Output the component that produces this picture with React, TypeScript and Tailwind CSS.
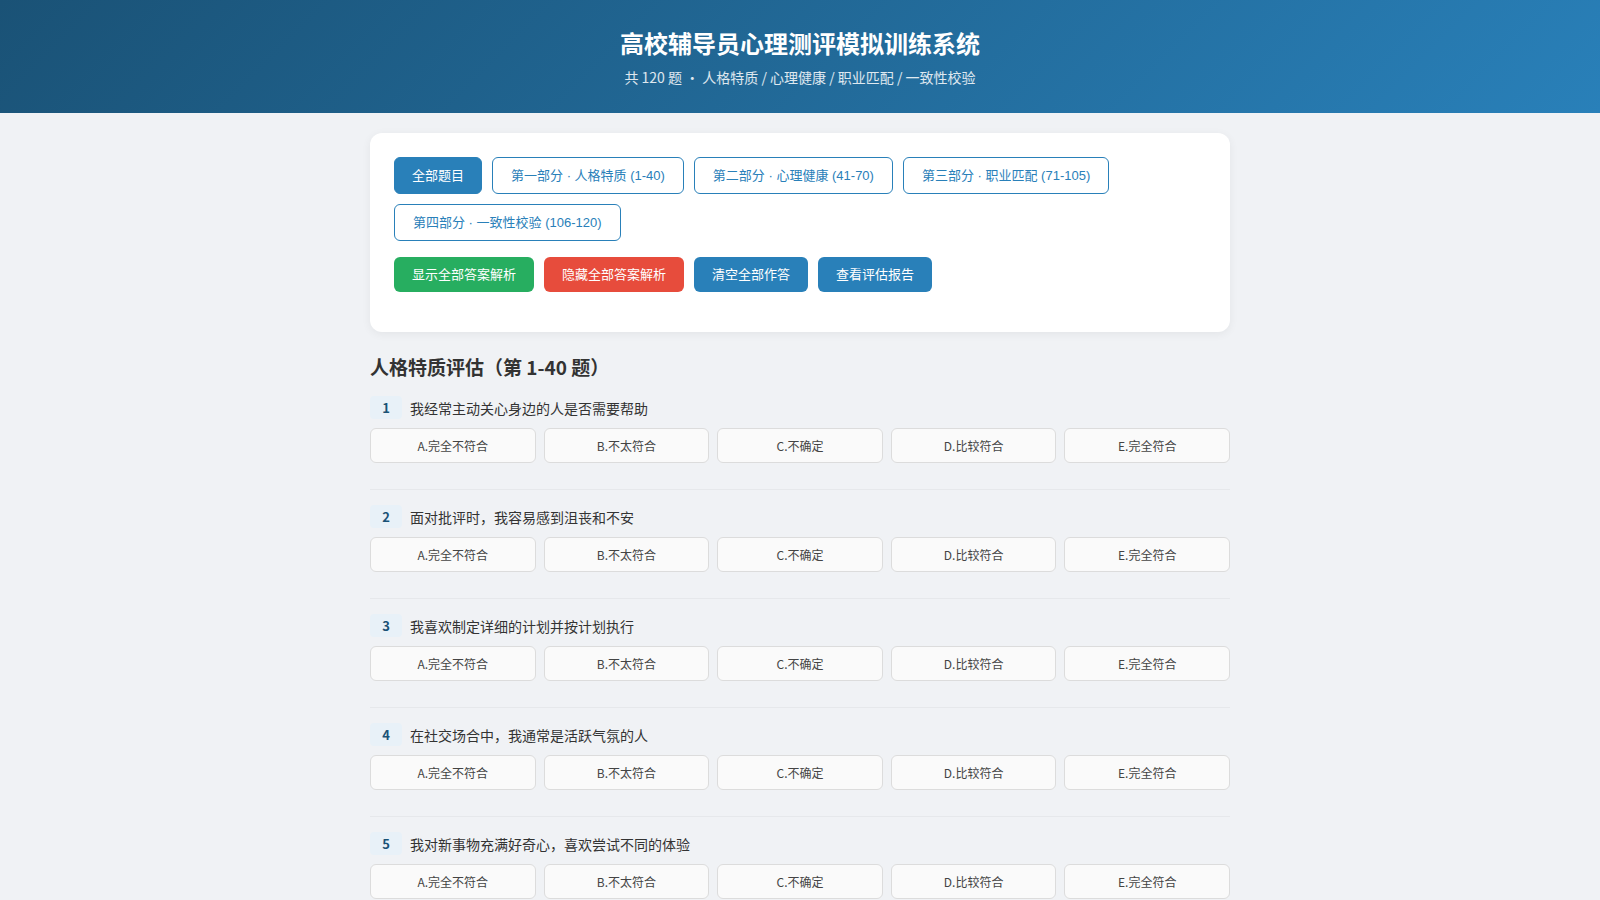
import React from "react";

const filters = [
  "全部题目",
  "第一部分 · 人格特质 (1-40)",
  "第二部分 · 心理健康 (41-70)",
  "第三部分 · 职业匹配 (71-105)",
  "第四部分 · 一致性校验 (106-120)",
];

const questions = [
  "我经常主动关心身边的人是否需要帮助",
  "面对批评时，我容易感到沮丧和不安",
  "我喜欢制定详细的计划并按计划执行",
  "在社交场合中，我通常是活跃气氛的人",
  "我对新事物充满好奇心，喜欢尝试不同的体验",
  "我能够在压力下保持冷静",
];

const options = ["A.完全不符合", "B.不太符合", "C.不确定", "D.比较符合", "E.完全符合"];

const btnFont = { fontFamily: '"Liberation Sans", "Noto Sans CJK SC", sans-serif' };

export default function App() {
  return (
    <div
      className="min-h-screen bg-[#f0f2f5] text-[#333]"
      style={{ fontFamily: '"Noto Sans CJK SC", "Noto Sans", sans-serif' }}
    >
      <header className="bg-[linear-gradient(135deg,#1a5276,#2980b9)] pt-[27px] pb-[25px] text-center text-white">
        <h1 className="text-[24px] font-bold leading-[32px]">高校辅导员心理测评模拟训练系统</h1>
        <p className="mt-[8px] text-[14px] leading-[21px] text-white/85">
          共 120 题 · 人格特质 / 心理健康 / 职业匹配 / 一致性校验
        </p>
      </header>

      <main className="mx-auto w-[860px] pt-[20px]">
        <section className="rounded-[12px] bg-white px-[24px] pt-[24px] pb-[40px] shadow-[0_2px_10px_rgba(0,0,0,0.06)]">
          <div className="flex flex-wrap gap-[10px]" style={btnFont}>
            {filters.map((f, i) => (
              <button
                key={f}
                className={
                  i === 0
                    ? "rounded-[6px] border border-[#2980b9] bg-[#2980b9] px-[17px] py-[8px] text-[13px] leading-[19px] text-white"
                    : "rounded-[6px] border border-[#2980b9] bg-white px-[18px] py-[8px] text-[13px] leading-[19px] text-[#2980b9]"
                }
              >
                {f}
              </button>
            ))}
          </div>
          <div className="mt-[16px] flex gap-[10px]" style={btnFont}>
            <button className="rounded-[6px] bg-[#27ae60] px-[18px] py-[8px] text-[13px] leading-[19px] text-white">
              显示全部答案解析
            </button>
            <button className="rounded-[6px] bg-[#e74c3c] px-[18px] py-[8px] text-[13px] leading-[19px] text-white">
              隐藏全部答案解析
            </button>
            <button className="rounded-[6px] bg-[#2980b9] px-[18px] py-[8px] text-[13px] leading-[19px] text-white">
              清空全部作答
            </button>
            <button className="rounded-[6px] bg-[#2980b9] px-[18px] py-[8px] text-[13px] leading-[19px] text-white">
              查看评估报告
            </button>
          </div>
        </section>

        <h2 className="mt-[22px] mb-[16px] text-[19px] font-bold leading-[26px] text-[#333]">
          人格特质评估（第 1-40 题）
        </h2>

        <div>
          {questions.map((q, qi) => (
            <div key={qi} className="mb-[15px] border-b border-[#e6e8eb] pb-[26px]">
              <div className="mb-[9px] flex h-[23px] items-center gap-[8px]">
                <span className="flex h-[23px] w-[32px] items-center justify-center rounded-[4px] bg-[#e8f1f8] text-[13px] font-bold text-[#1a5276]">
                  {qi + 1}
                </span>
                <span className="text-[14px] leading-[20px] text-[#333]">{q}</span>
              </div>
              <div className="grid grid-cols-5 gap-[8px]">
                {options.map((o) => (
                  <button
                    key={o}
                    className="h-[35px] rounded-[6px] border border-[#dcdcdc] bg-[#fafafa] text-[12px] text-[#444]"
                  >
                    {o}
                  </button>
                ))}
              </div>
            </div>
          ))}
        </div>
      </main>
    </div>
  );
}
